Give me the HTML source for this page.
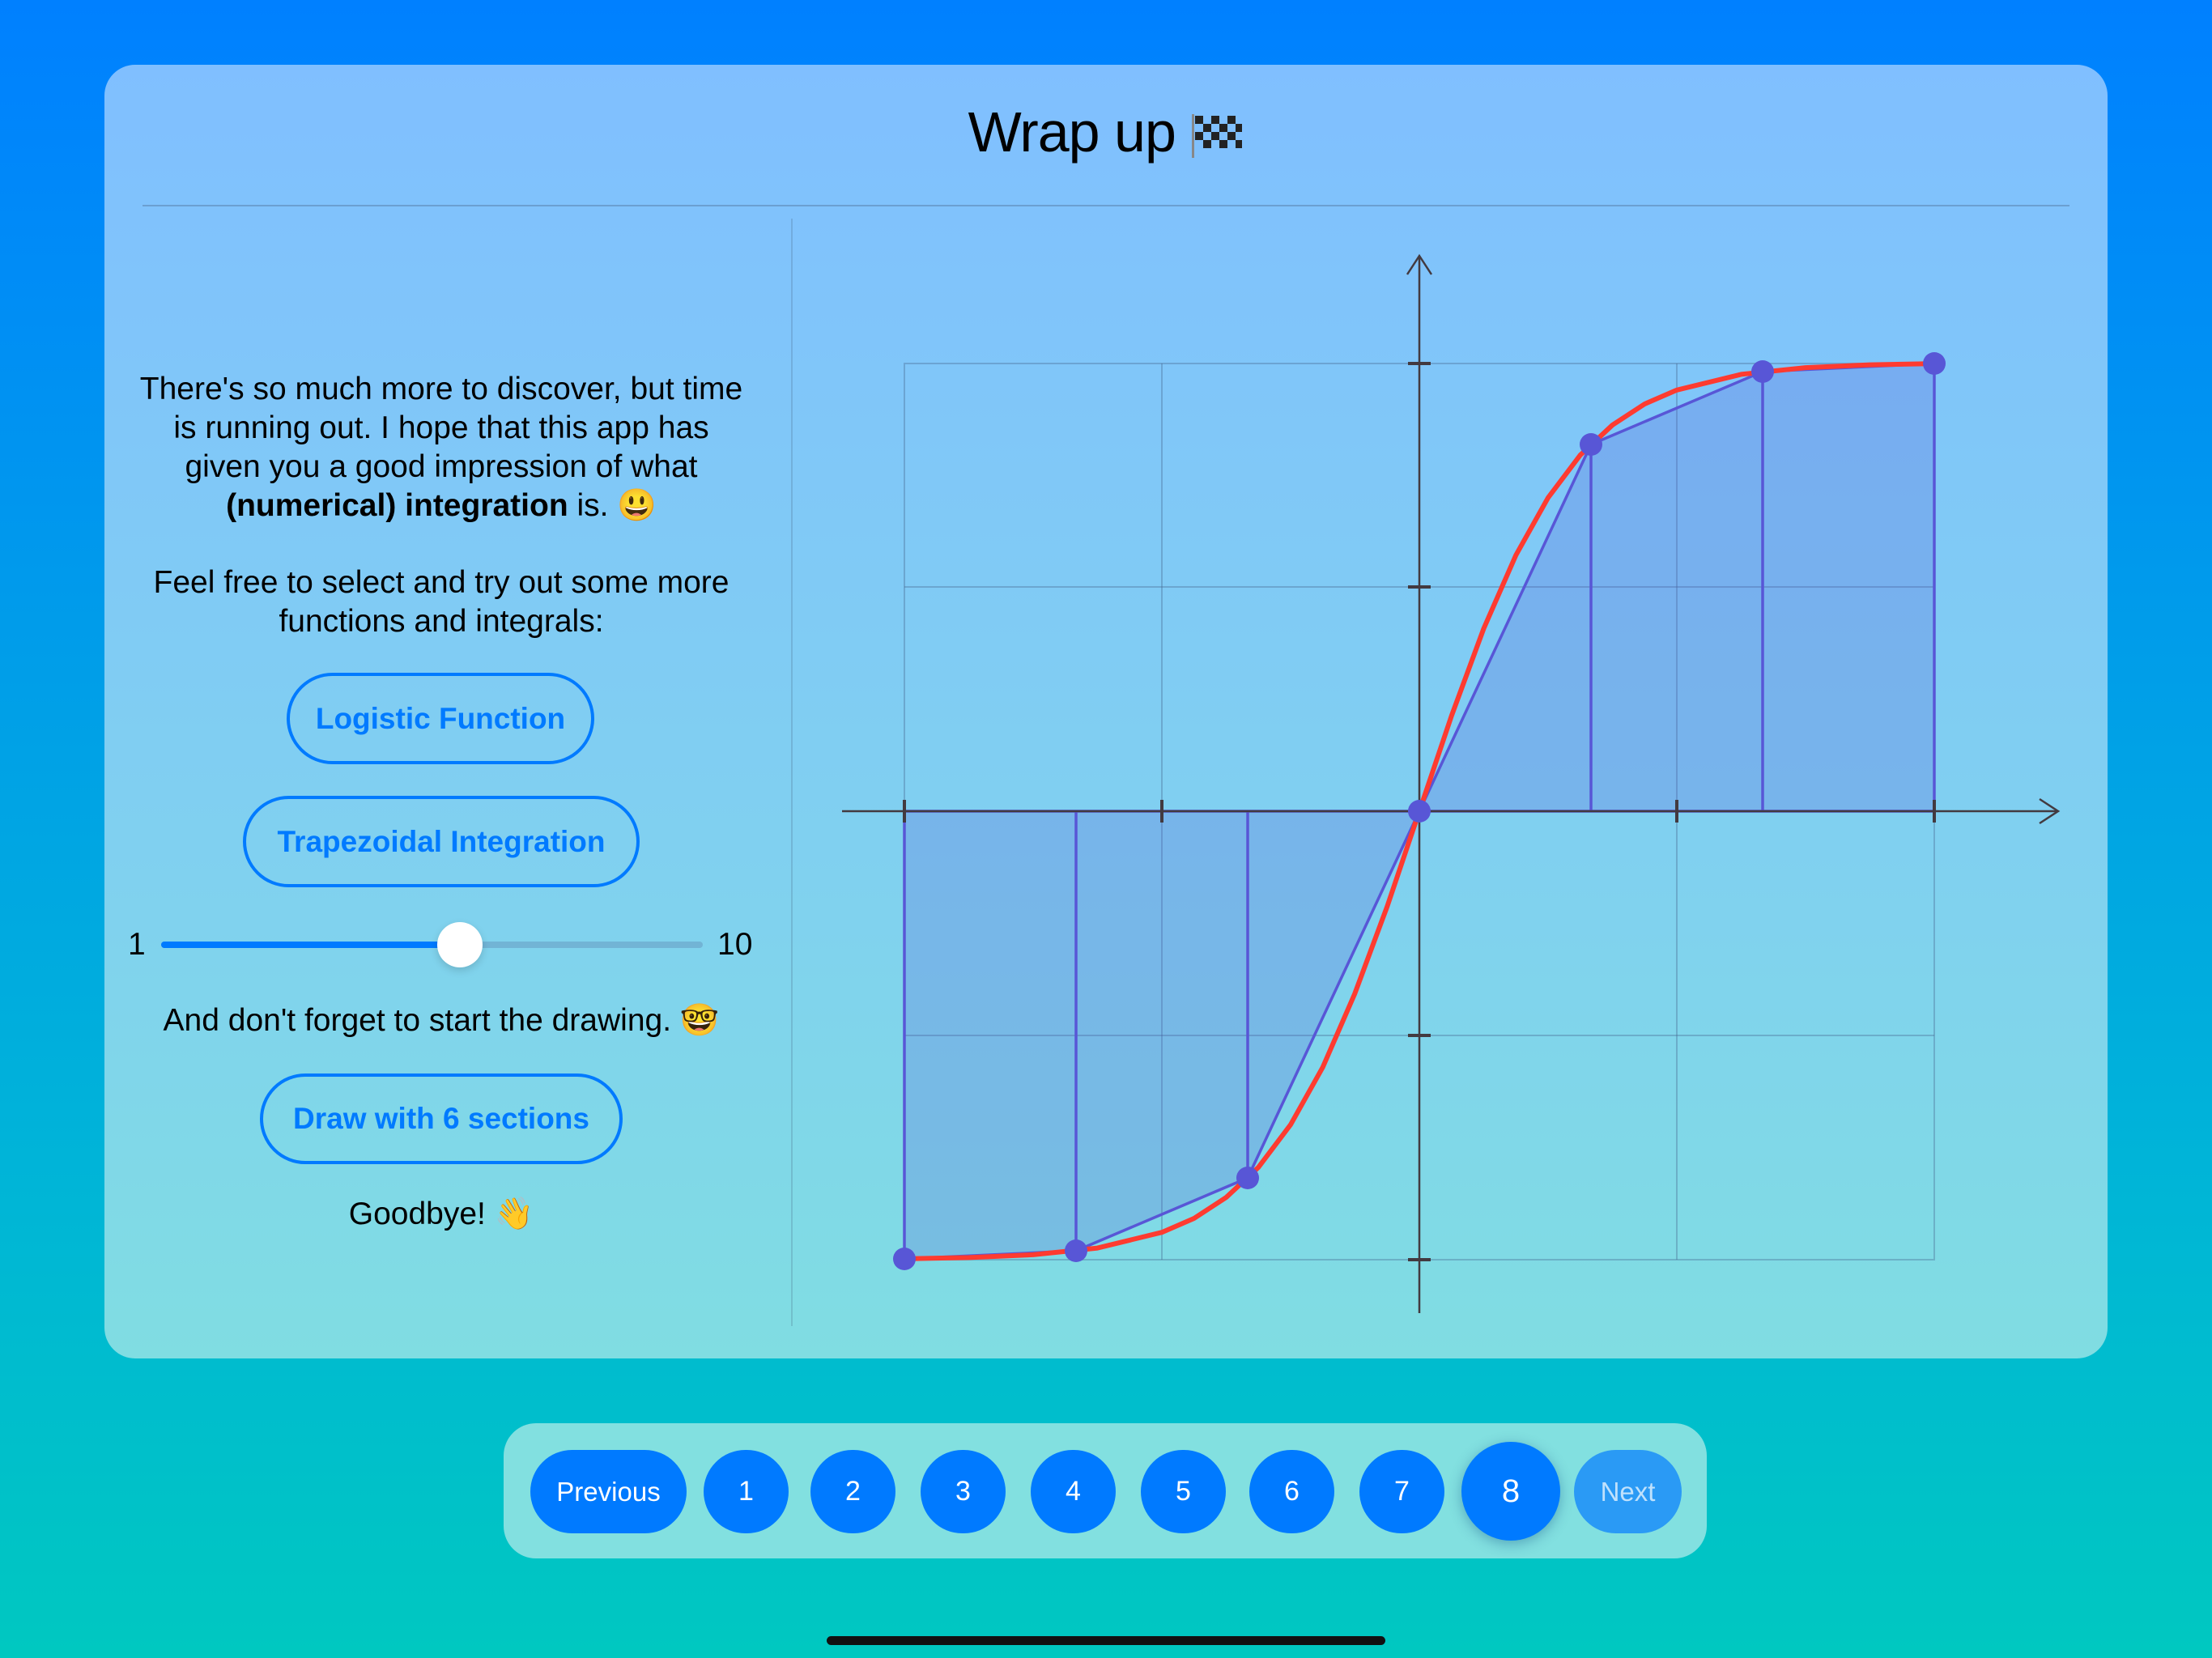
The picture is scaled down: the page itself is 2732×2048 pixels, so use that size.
<!DOCTYPE html>
<html><head><meta charset="utf-8"><style>
html,body{margin:0;padding:0}
body{width:2732px;height:2048px;position:relative;overflow:hidden;background:linear-gradient(180deg,#0080ff 0%,#00b4d8 70%,#00c8c0 100%);font-family:"Liberation Sans",sans-serif}
.card{position:absolute;left:129px;top:80px;width:2474px;height:1598px;border-radius:38px;background:linear-gradient(180deg,#80bfff 0%,#80d0f0 60%,#80dde2 100%)}
.t{position:absolute;left:100px;width:890px;text-align:center;font-size:39px;line-height:48px;color:#000;letter-spacing:0;white-space:nowrap}
.btn{position:absolute;box-sizing:border-box;border:4px solid #007aff;border-radius:60px;color:#007aff;font-weight:bold;font-size:37px;letter-spacing:0;display:flex;align-items:center;justify-content:center}
.nav{position:absolute;left:622px;top:1758px;width:1486px;height:167px;border-radius:40px;background:#82e0e0}
.c{position:absolute;top:1791px;height:103px;width:105px;border-radius:52px;background:#007aff;color:#fff;font-size:34px;display:flex;align-items:center;justify-content:center}
</style></head><body>
<div class="card"></div>
<div style="position:absolute;left:0;width:2732px;top:118px;text-align:center;font-size:70px;line-height:90px;color:#000;letter-spacing:-1px">Wrap up <svg width="66" height="58" viewBox="0 0 66 58" style="vertical-align:-10px"><rect x="2" y="2" width="3" height="54" fill="#888"/><g fill="#222"><rect x="6" y="4" width="10" height="10"/><rect x="26" y="4" width="10" height="10"/><rect x="46" y="4" width="10" height="10"/><rect x="16" y="14" width="10" height="10"/><rect x="36" y="14" width="10" height="10"/><rect x="56" y="14" width="8" height="10"/><rect x="6" y="24" width="10" height="10"/><rect x="26" y="24" width="10" height="10"/><rect x="46" y="24" width="10" height="10"/><rect x="16" y="34" width="10" height="10"/><rect x="36" y="34" width="10" height="10"/><rect x="56" y="34" width="8" height="10"/></g></svg></div>
<div style="position:absolute;left:176px;top:253px;width:2380px;height:2px;background:rgba(60,80,110,0.3)"></div>
<div style="position:absolute;left:977px;top:270px;width:2px;height:1368px;background:rgba(60,80,110,0.2)"></div>

<div class="t" style="top:457px">There's so much more to discover, but time</div>
<div class="t" style="top:505px">is running out. I hope that this app has</div>
<div class="t" style="top:553px">given you a good impression of what</div>
<div class="t" style="top:601px"><b>(numerical) integration</b> is. 😃</div>
<div class="t" style="top:696px">Feel free to select and try out some more</div>
<div class="t" style="top:744px">functions and integrals:</div>
<div class="btn" style="left:354px;top:831px;width:380px;height:113px">Logistic Function</div>
<div class="btn" style="left:300px;top:983px;width:490px;height:113px">Trapezoidal Integration</div>
<div style="position:absolute;left:158px;top:1143px;font-size:39px;line-height:48px">1</div>
<div style="position:absolute;left:886px;top:1143px;font-size:39px;line-height:48px">10</div>
<div style="position:absolute;left:199px;top:1163px;width:669px;height:8px;border-radius:4px;background:rgba(100,150,190,0.5)"></div>
<div style="position:absolute;left:199px;top:1163px;width:370px;height:8px;border-radius:4px;background:#007aff"></div>
<div style="position:absolute;left:540px;top:1139px;width:56px;height:56px;border-radius:28px;background:#fff;box-shadow:0 4px 10px rgba(0,0,0,0.15)"></div>
<div class="t" style="top:1237px">And don't forget to start the drawing. 🤓</div>
<div class="btn" style="left:321px;top:1326px;width:448px;height:112px">Draw with 6 sections</div>
<div class="t" style="top:1476px">Goodbye! 👋</div>

<svg style="position:absolute;left:0;top:0" width="2732" height="2048">
<g stroke="rgba(70,100,140,0.35)" stroke-width="2" fill="none">
<rect x="1117" y="449" width="1272" height="1107"/>
<line x1="1435" y1="449" x2="1435" y2="1556"/><line x1="2071" y1="449" x2="2071" y2="1556"/>
<line x1="1117" y1="725" x2="2389" y2="725"/><line x1="1117" y1="1279" x2="2389" y2="1279"/>
</g>
<path d="M1117,1002 L1117,1555 L1329,1545 L1541,1455 L1753,1002 L1965,549 L2177,459 L2389,449 L2389,1002 Z" fill="rgba(88,86,214,0.22)" stroke="#5856d6" stroke-width="3.5"/>
<g stroke="#5856d6" stroke-width="3.5"><line x1="1329" y1="1002" x2="1329" y2="1545"/><line x1="1541" y1="1002" x2="1541" y2="1455"/><line x1="1965" y1="1002" x2="1965" y2="549"/><line x1="2177" y1="1002" x2="2177" y2="459"/></g>
<g stroke="#433a40" stroke-width="2.5" fill="none">
<line x1="1040" y1="1002" x2="2542" y2="1002"/><polyline points="2519,987 2542,1002 2519,1017"/>
<line x1="1753" y1="316" x2="1753" y2="1622"/><polyline points="1738,339 1753,316 1768,339"/>
</g>
<g stroke="#433a40" stroke-width="4"><line x1="1117" y1="988" x2="1117" y2="1016"/><line x1="1435" y1="988" x2="1435" y2="1016"/><line x1="2071" y1="988" x2="2071" y2="1016"/><line x1="2389" y1="988" x2="2389" y2="1016"/>
<line x1="1739" y1="449" x2="1767" y2="449"/><line x1="1739" y1="725" x2="1767" y2="725"/><line x1="1739" y1="1279" x2="1767" y2="1279"/><line x1="1739" y1="1556" x2="1767" y2="1556"/></g>
<polyline fill="none" stroke="#ff3b30" stroke-width="6" stroke-linejoin="round" points="1117,1554.9 1196.5,1553.4 1276,1549.9 1355.5,1541.6 1435,1522.2 1474.7,1505 1514.5,1479 1554.2,1441.9 1594,1389.2 1633.7,1318.3 1673.2,1227.6 1713.2,1119.9 1753,1002 1792.8,884.1 1832.5,776.4 1872.3,685.7 1912,614.8 1951.8,562.1 1991.5,525 2031.3,499 2071,481.8 2150.5,462.4 2230,454.1 2309.5,450.6 2389,449.1"/>
<g fill="#5856d6"><circle cx="1117" cy="1555" r="14"/><circle cx="1329" cy="1545" r="14"/><circle cx="1541" cy="1455" r="14"/><circle cx="1753" cy="1002" r="14"/><circle cx="1965" cy="549" r="14"/><circle cx="2177" cy="459" r="14"/><circle cx="2389" cy="449" r="14"/></g>
</svg>

<div class="nav"></div>
<div class="c" style="left:655px;width:193px;font-size:33px">Previous</div>
<div class="c" style="left:869px">1</div>
<div class="c" style="left:1001px">2</div>
<div class="c" style="left:1137px">3</div>
<div class="c" style="left:1273px">4</div>
<div class="c" style="left:1409px">5</div>
<div class="c" style="left:1543px">6</div>
<div class="c" style="left:1679px">7</div>
<div class="c" style="left:1805px;top:1781px;width:122px;height:122px;border-radius:61px;font-size:40px;box-shadow:0 4px 16px rgba(0,60,120,0.35)">8</div>
<div class="c" style="left:1944px;width:133px;background:#2a9af5;color:rgba(255,255,255,0.7);font-size:33px">Next</div>
<div style="position:absolute;left:1021px;top:2021px;width:690px;height:11px;border-radius:6px;background:#111"></div>
</body></html>
